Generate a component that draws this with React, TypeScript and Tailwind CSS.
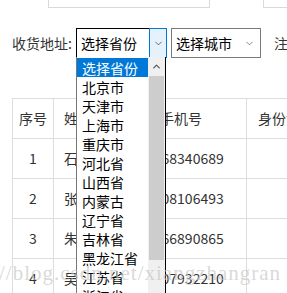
import { ChevronDown, ChevronUp } from "lucide-react"

const provinces = [
  "选择省份", "北京市", "天津市", "上海市", "重庆市", "河北省", "山西省",
  "内蒙古", "辽宁省", "吉林省", "黑龙江省", "江苏省", "浙江省",
]

const rows = [
  { id: 1, name: "石磊", phone: "13868340689" },
  { id: 2, name: "张晓明", phone: "13708106493" },
  { id: 3, name: "朱小红", phone: "15066890865" },
  { id: 4, name: "吴建国", phone: "13907932210" },
]

export default function App() {
  return (
    <div
      className="relative w-[287px] h-[293px] overflow-hidden bg-white text-[14px] text-[#333]"
      style={{ fontFamily: '"Noto Sans CJK SC", "Noto Sans", sans-serif' }}
    >
      {/* previous form row, cut off at the top */}
      <div className="flex h-[8px]">
        <div className="shrink-0 ml-[48px] w-[162px] border border-t-0 border-[#d9d9d9]" />
        <div className="shrink-0 ml-[53px] w-[40px] border border-t-0 border-r-0 border-[#d9d9d9]" />
      </div>

      {/* address row */}
      <div className="flex items-center mt-[20px] pl-[12px] h-[30px] whitespace-nowrap">
        <span className="shrink-0 w-[64px] leading-none">收货地址:</span>
        <div className="shrink-0 flex w-[91px] h-[30px]">
          <div className="flex-1 flex items-center pl-[4px] border border-r-0 border-black text-black leading-none">
            选择省份
          </div>
          <div className="w-[18px] flex items-center justify-center bg-[#e5f1fb] border border-[#0078d7]">
            <ChevronDown size={11} strokeWidth={1.5} className="text-[#333]" />
          </div>
        </div>
        <div className="shrink-0 ml-[4px] w-[90px] h-[30px] flex items-center justify-between pl-[4px] pr-[5px] border border-[#7a7a7a] text-black leading-none">
          <span>选择城市</span>
          <ChevronDown size={11} strokeWidth={1.5} className="text-[#555]" />
        </div>
        <span className="shrink-0 ml-[13px] leading-none">注意</span>
      </div>

      {/* table */}
      <div className="mt-[40px] ml-[12px] w-[300px] border-t border-l border-[#ddd]">
        <div className="grid grid-cols-[41px_62px_131px_66px] h-[40px]">
          <div className="flex items-center justify-center border-r border-b border-[#ddd]">序号</div>
          <div className="flex items-center pl-[10px] border-r border-b border-[#ddd]">姓名</div>
          <div className="flex items-center justify-center border-r border-b border-[#ddd]">手机号</div>
          <div className="flex items-center pl-[11px] border-r border-b border-[#ddd]">身份证</div>
        </div>
        {rows.map((r) => (
          <div key={r.id} className="grid grid-cols-[41px_62px_131px_66px] h-[40px]">
            <div className="flex items-center justify-center border-r border-b border-[#ddd]">{r.id}</div>
            <div className="flex items-center pl-[10px] border-r border-b border-[#ddd]">{r.name}</div>
            <div className="flex items-center justify-center border-r border-b border-[#ddd]">{r.phone}</div>
            <div className="border-r border-b border-[#ddd]" />
          </div>
        ))}
      </div>

      {/* open province dropdown */}
      <div className="absolute left-[76px] top-[57px] w-[90px] h-[240px] flex bg-white border-l border-[#777] border-r border-r-black">
        <div className="flex-1 pt-[1px] text-black">
          {provinces.map((p, i) => (
            <div
              key={p}
              className={`h-[19px] flex items-center pl-[5px] leading-none whitespace-nowrap ${
                i === 0 ? "bg-[#0078d7] text-white" : ""
              }`}
            >
              {p}
            </div>
          ))}
        </div>
        <div className="w-[17px] flex flex-col bg-[#f0f0f0]">
          <div className="h-[19px] flex items-center justify-center">
            <ChevronUp size={11} strokeWidth={3} className="text-[#606060]" />
          </div>
          <div className="mx-[1px] h-[184px] bg-[#cdcdcd]" />
        </div>
      </div>

      {/* watermark */}
      <div
        className="absolute left-[-1px] top-[263px] text-[21px] leading-none tracking-[1px] text-[#c8c8c8]/70 whitespace-nowrap pointer-events-none"
        style={{ fontFamily: '"Liberation Serif", serif' }}
      >
        //blog.csdn.net/xiangzhangran
      </div>
    </div>
  )
}
